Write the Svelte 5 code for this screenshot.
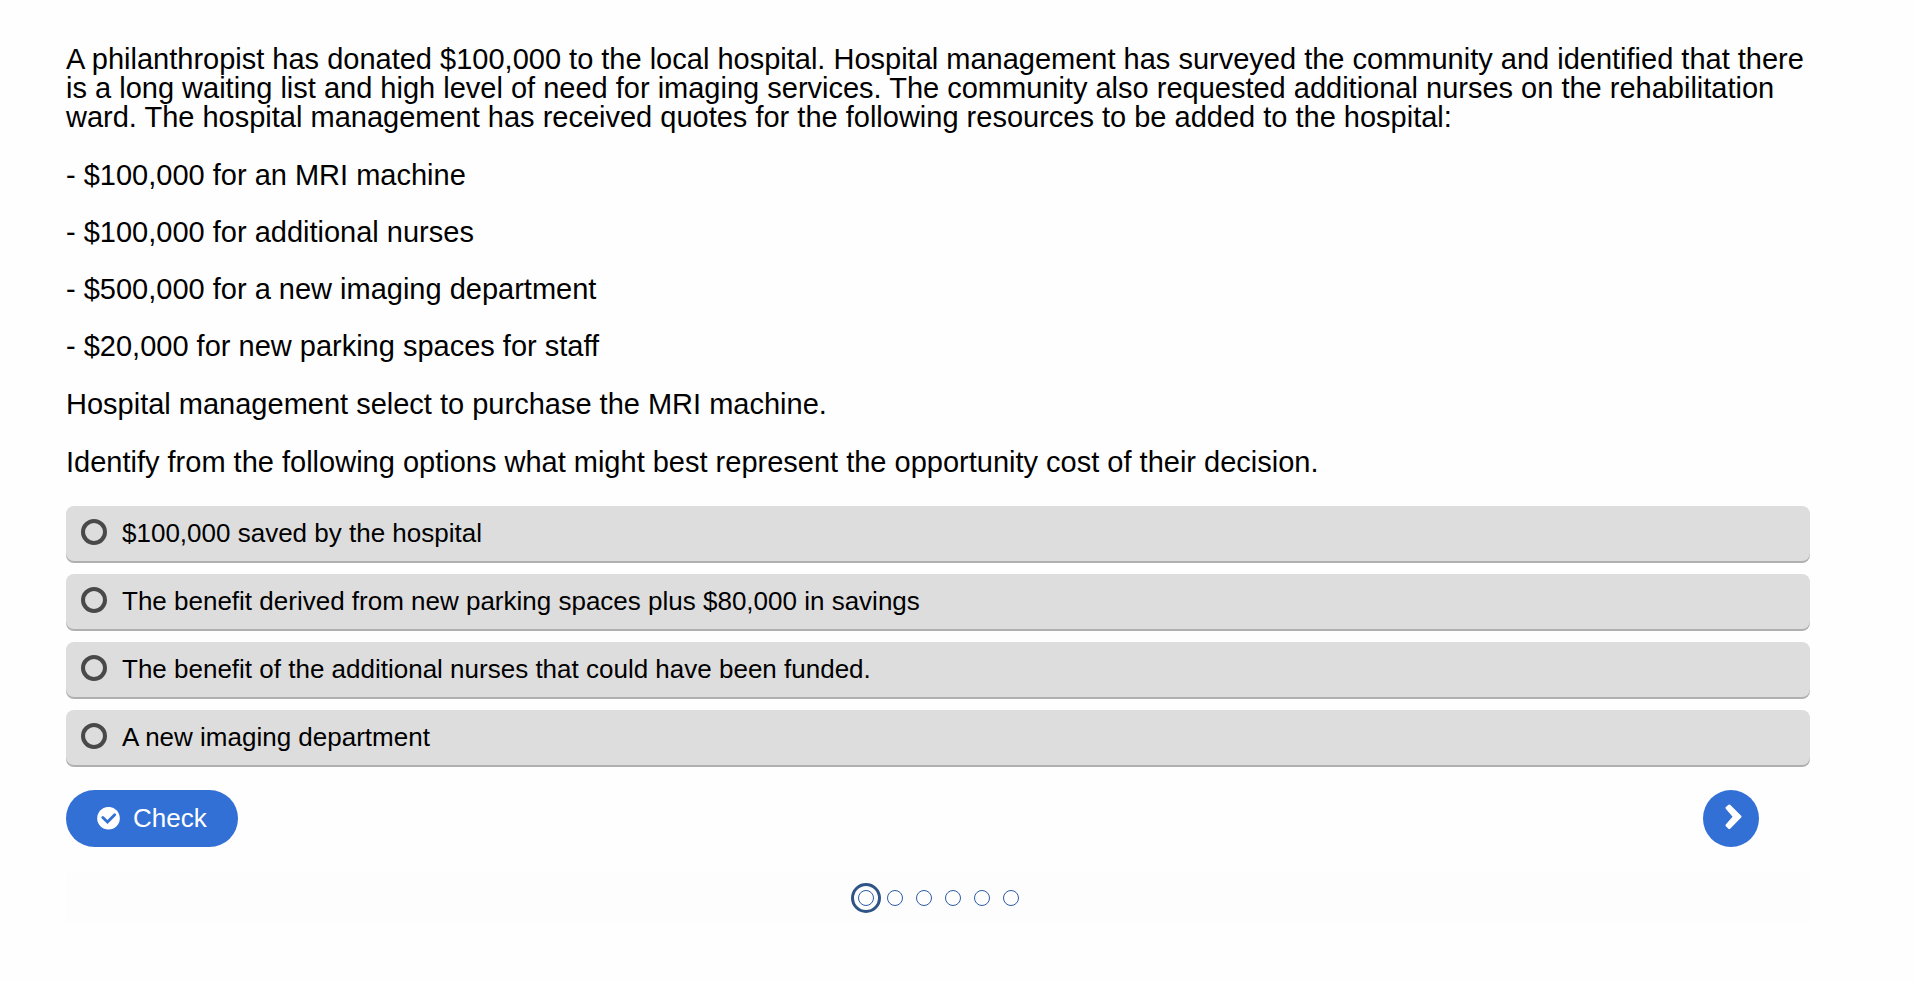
<script>
  const quotes = [
    '$100,000 for an MRI machine',
    '$100,000 for additional nurses',
    '$500,000 for a new imaging department',
    '$20,000 for new parking spaces for staff'
  ];
  const options = [
    '$100,000 saved by the hospital',
    'The benefit derived from new parking spaces plus $80,000 in savings',
    'The benefit of the additional nurses that could have been funded.',
    'A new imaging department'
  ];
  const pages = [1, 2, 3, 4, 5, 6];
  let selected = $state(null);
  let current = $state(1);
</script>

<main>
  <form onsubmit={(e) => e.preventDefault()}>
    <div class="question" id="question">
      <p>A philanthropist has donated $100,000 to the local hospital. Hospital management has surveyed the community and identified that there is a long waiting list and high level of need for imaging services. The community also requested additional nurses on the rehabilitation ward. The hospital management has received quotes for the following resources to be added to the hospital:</p>
      <div class="quotes">
        {#each quotes as quote}
          <p>- {quote}</p>
        {/each}
      </div>
      <p>Hospital management select to purchase the MRI machine.</p>
      <p>Identify from the following options what might best represent the opportunity cost of their decision.</p>
    </div>

    <div class="options" role="radiogroup" aria-labelledby="question">
      {#each options as option, i}
        <label class="option">
          <input type="radio" name="answer" value={i} bind:group={selected} />
          <span>{option}</span>
        </label>
      {/each}
    </div>

    <div class="actions">
      <button class="check" type="submit">
        <svg viewBox="0 0 23 23" aria-hidden="true">
          <circle cx="11.500" cy="11.200" r="11.300" fill="#fff" />
          <path d="M5.800 10.400l4.700 4.700 7.200-7.300" fill="none" stroke="#3270d6" stroke-width="2.800" stroke-linecap="round" />
        </svg>
        Check
      </button>
      <button class="next" type="button" aria-label="Next question" onclick={() => (current = Math.min(current + 1, 6))}>
        <svg viewBox="0 0 56 57" aria-hidden="true">
          <path d="M23.700 18l2.600-2.300 11 11-11 11.300-2.600-2.700 7.400-8.600z" fill="#fff" stroke="#fff" stroke-width="2.400" stroke-linejoin="round" />
        </svg>
      </button>
    </div>
  </form>

  <nav aria-label="Questions">
    {#each pages as page}
      <button class="dot" class:current={page === current} type="button" aria-label={`Question ${page}`} onclick={() => (current = page)}></button>
    {/each}
  </nav>
</main>

<style>
  :global(body) {
    margin: 0;
    background: #fefefe;
  }
  main {
    padding: 45px 104px 45px 66px;
    font-family: 'Liberation Sans', Arial, sans-serif;
    color: #000;
  }
  .question {
    display: flex;
    flex-direction: column;
    gap: 29px;
    font-size: 29px;
    line-height: 29px;
  }
  .quotes {
    display: flex;
    flex-direction: column;
    gap: 28px;
  }
  p {
    margin: 0;
  }
  .options {
    display: flex;
    flex-direction: column;
    gap: 13px;
    margin-top: 29px;
  }
  .option {
    display: flex;
    align-items: flex-start;
    gap: 15px;
    padding: 13px 15px;
    border-radius: 8px;
    background: #ddd;
    box-shadow: 0 2px 0 #b0b0b0;
    font-size: 26px;
    line-height: 29px;
    cursor: pointer;
  }
  .option input {
    appearance: none;
    flex: none;
    box-sizing: border-box;
    width: 26px;
    height: 26px;
    margin: 0;
    border: 4px solid #494949;
    border-radius: 50%;
  }
  .option input:checked {
    background: radial-gradient(#494949 50%, transparent 55%);
  }
  .actions {
    display: flex;
    justify-content: space-between;
    margin-top: 25px;
    padding-right: 51px;
  }
  .actions button {
    display: flex;
    align-items: center;
    height: 57px;
    border: 0;
    background: #3270d6;
    color: #fff;
    font: 26px/29px 'Liberation Sans', Arial, sans-serif;
    cursor: pointer;
  }
  .check {
    gap: 13px;
    padding: 0 31px;
    border-radius: 29px;
  }
  .check svg {
    width: 23px;
    height: 23px;
  }
  .next {
    justify-content: center;
    width: 56px;
    padding: 0;
    border-radius: 50%;
  }
  .next svg {
    width: 56px;
    height: 57px;
  }
  nav {
    display: flex;
    justify-content: center;
    gap: 13px;
    margin-top: 26px;
    padding: 17px 0;
    background: #fdfdfd;
  }
  .dot {
    box-sizing: border-box;
    width: 16px;
    height: 16px;
    padding: 0;
    border: 1px solid #2c5aa8;
    border-radius: 50%;
    background: #fff;
    cursor: pointer;
  }
  .current {
    outline: 3px solid #2f5486;
    outline-offset: 4px;
  }
</style>
